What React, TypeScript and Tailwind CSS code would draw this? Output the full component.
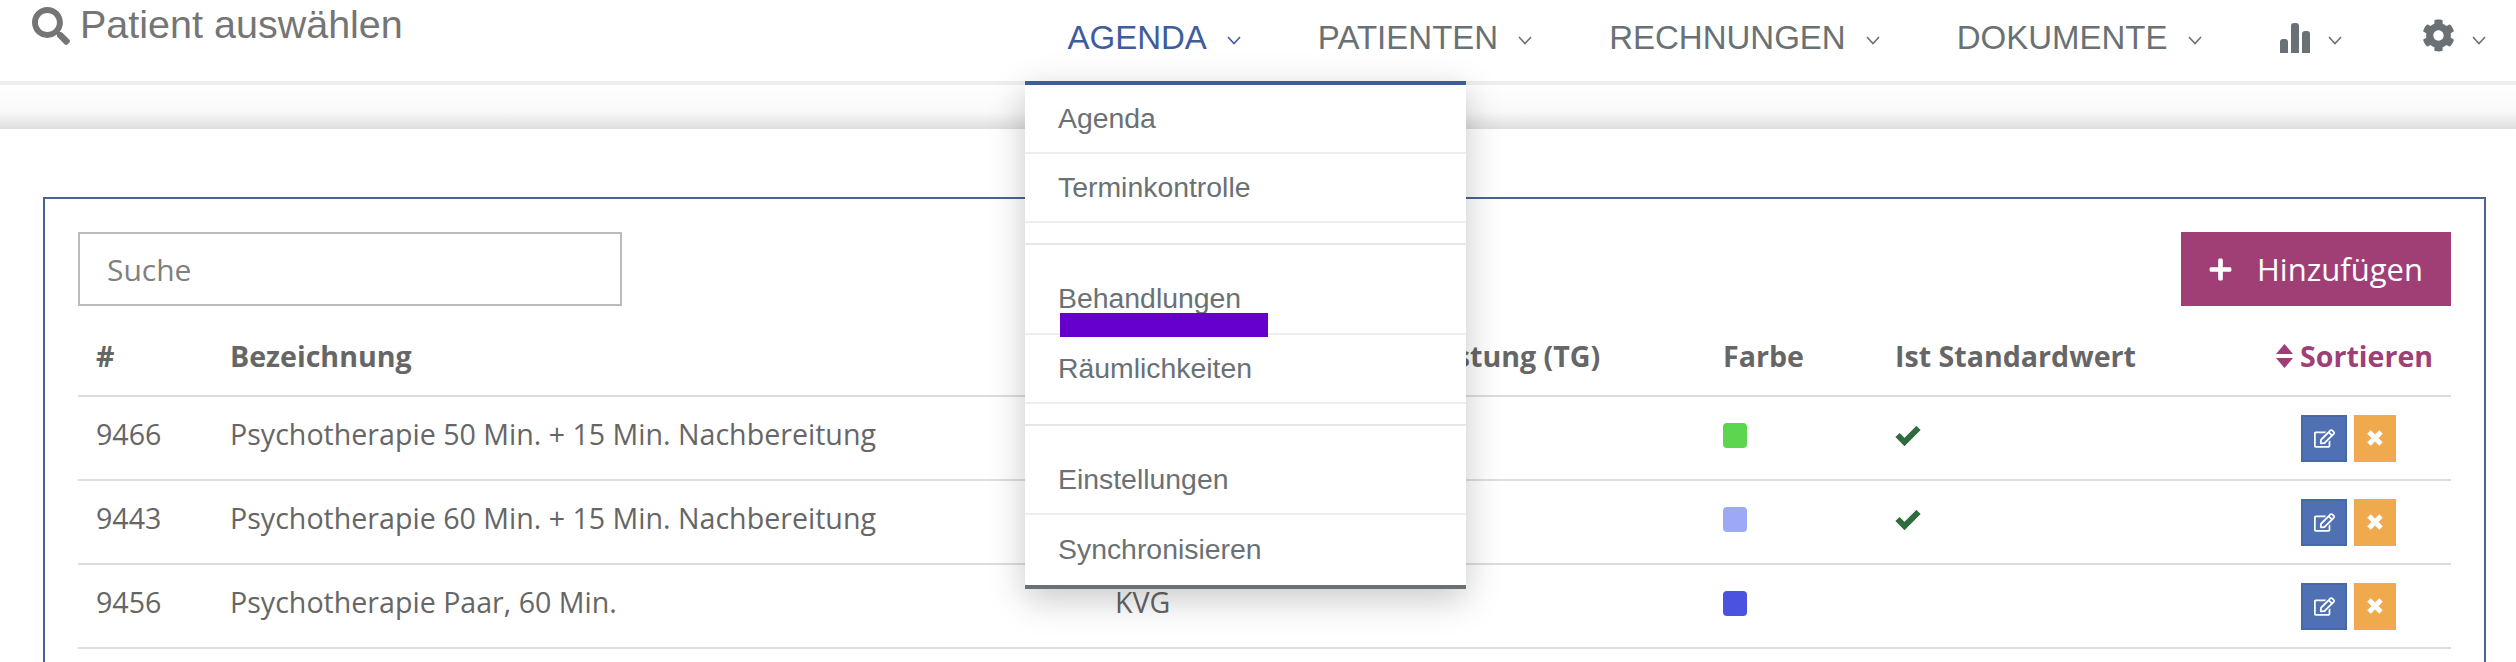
import { FaSearch, FaCog, FaPlus, FaRegEdit } from "react-icons/fa";

function Chevron() {
  return (
    <svg width="14" height="9" viewBox="0 0 14 9" fill="none" stroke="currentColor" strokeWidth="1.6" className="mt-[4px]">
      <polyline points="1,1 7,7.5 13,1" />
    </svg>
  );
}

function Bars() {
  return (
    <svg width="30" height="30" viewBox="0 0 30 30" fill="currentColor">
      <path d="M0 30V19a3 3 0 0 1 3-3h2a3 3 0 0 1 3 3v11z" />
      <path d="M11 30V3a3 3 0 0 1 3-3h2a3 3 0 0 1 3 3v27z" />
      <path d="M22 30V11a3 3 0 0 1 3-3h2a3 3 0 0 1 3 3v19z" />
    </svg>
  );
}

function Check() {
  return (
    <svg width="26" height="20" viewBox="0 0 26 20" fill="none" stroke="#2f6b3c" strokeWidth="6" className="mb-[4px]">
      <polyline points="2.5,9 9.5,16 23.5,2" />
    </svg>
  );
}

function Cross() {
  return (
    <svg width="16" height="16" viewBox="0 0 16 16" fill="none" stroke="white" strokeWidth="5">
      <path d="M2 2L14 14M14 2L2 14" />
    </svg>
  );
}

function Sort() {
  return (
    <svg width="17" height="24" viewBox="0 0 17 24" fill="currentColor" className="shrink-0">
      <path d="M8.5 0L17 10H0z" />
      <path d="M0 14H17L8.5 24z" />
    </svg>
  );
}

const navItems = ["PATIENTEN", "RECHNUNGEN", "DOKUMENTE"];
const rows = [
  { id: "9466", name: "Psychotherapie 50 Min. + 15 Min. Nachbereitung", tarif: "", color: "bg-[#5cd64f]", std: true },
  { id: "9443", name: "Psychotherapie 60 Min. + 15 Min. Nachbereitung", tarif: "", color: "bg-[#9ea9f5]", std: true },
  { id: "9456", name: "Psychotherapie Paar, 60 Min.", tarif: "KVG", color: "bg-[#4c52e0]", std: false },
];
const cols = "grid grid-cols-[134px_885px_280px_328px_172px_381px_193px]";

function MenuItem({ label, h }: { label: string; h: string }) {
  return (
    <div className={`${h} flex items-center border-b-2 border-[#eeeeee] pl-[33px]`}>
      <span>{label}</span>
    </div>
  );
}

export default function App() {
  return (
    <div className="relative h-[662px] w-[2516px] overflow-hidden bg-white font-['Liberation_Sans',sans-serif]">
      <header className="flex h-[85px] items-start border-b-4 border-[#eeeeee] bg-white pl-[32px] pr-[30px] text-[#6a7175]">
        <div className="flex h-[50px] items-center gap-[10px] text-[39.5px] text-[#757575]">
          <FaSearch className="mt-[2px] size-[38px]" />
          <span>Patient auswählen</span>
        </div>
        <nav className="ml-auto flex h-[76px] items-center gap-[77px] text-[33px]">
          <div className="flex items-center gap-[20px] text-[#3f5c9c]">
            <span>AGENDA</span>
            <Chevron />
          </div>
          {navItems.map((n) => (
            <div key={n} className="flex items-center gap-[20px]">
              <span>{n}</span>
              <Chevron />
            </div>
          ))}
          <div className="ml-[1.5px] flex items-center gap-[18px]">
            <Bars />
            <Chevron />
          </div>
          <div className="ml-[3px] flex items-center gap-[17px]">
            <FaCog className="mb-[6px] size-[33px]" />
            <Chevron />
          </div>
        </nav>
      </header>

      <div className="h-[44px] bg-gradient-to-b from-white via-[#f9f9f9] via-60% to-[#dedede]" />

      <main className="pl-[43px] pr-[30px] pt-[68px]">
        <div className="h-[600px] border-2 border-[#4a6690] p-[33px] font-['Open_Sans',sans-serif] text-[28.6px] text-[#666666]">
          <div className="flex items-center justify-between">
            <div className="flex h-[74px] w-[544px] items-center border-2 border-[#bbbbbb] pl-[27px] text-[30px] text-[#808080]">
              Suche
            </div>
            <button className="flex h-[74px] w-[270px] items-center gap-[24px] bg-[#a03e76] pl-[27px] text-[31px] text-white">
              <FaPlus className="size-[25px]" />
              <span>Hinzufügen</span>
            </button>
          </div>

          <div className={`${cols} h-[91px] items-center border-b-2 border-[#dddddd] pt-[12px] font-bold [&>div]:pl-[18px]`}>
            <div>#</div>
            <div>Bezeichnung</div>
            <div className="col-start-4 !pl-[37px]">Leistung (TG)</div>
            <div>Farbe</div>
            <div>Ist Standardwert</div>
            <div className="flex items-center gap-[7px] text-[#a03e76]">
              <Sort />
              <span>Sortieren</span>
            </div>
          </div>

          {rows.map((r) => (
            <div key={r.id} className={`${cols} h-[84px] items-center border-b-2 border-[#dddddd] [&>div]:pl-[18px]`}>
              <div className="mb-[8px]">{r.id}</div>
              <div className="mb-[8px]">{r.name}</div>
              <div className="mb-[8px]">{r.tarif}</div>
              <div />
              <div>
                <div className={`mb-[6px] h-[25px] w-[24px] rounded-[4px] ${r.color}`} />
              </div>
              <div>{r.std && <Check />}</div>
              <div className="flex gap-[7px] !pl-[43px]">
                <button className="flex h-[47px] w-[46px] items-center justify-center border-2 border-[#466aa5] bg-[#4f71b3] text-white">
                  <FaRegEdit className="size-[21px]" />
                </button>
                <button className="flex h-[47px] w-[42px] items-center justify-center bg-[#eeaa4d]">
                  <Cross />
                </button>
              </div>
            </div>
          ))}
        </div>
      </main>

      <div className="absolute left-[1025px] top-[81px] w-[441px] border-b-4 border-t-4 border-b-[#6a7175] border-t-[#3f5c9c] bg-white text-[28.4px] text-[#6a7175] shadow-[0_10px_34px_rgba(0,0,0,0.22)]">
        <MenuItem label="Agenda" h="h-[69px]" />
        <MenuItem label="Terminkontrolle" h="h-[69px]" />
        <div className="h-[22px] border-b-2 border-[#e6e6e6]" />
        <div className="flex h-[90px] items-end border-b-2 border-[#eeeeee] pb-[13px] pl-[33px]">Behandlungen</div>
        <MenuItem label="Räumlichkeiten" h="h-[69px]" />
        <div className="h-[22px] border-b-2 border-[#e6e6e6]" />
        <div className="flex h-[89px] items-end border-b-2 border-[#eeeeee] pb-[12px] pl-[33px]">Einstellungen</div>
        <div className="flex h-[70px] items-center pb-[2px] pl-[33px]">Synchronisieren</div>
      </div>

      <div className="absolute left-[1060px] top-[313px] h-[24px] w-[208px] bg-[#6600cc]" />
    </div>
  );
}
